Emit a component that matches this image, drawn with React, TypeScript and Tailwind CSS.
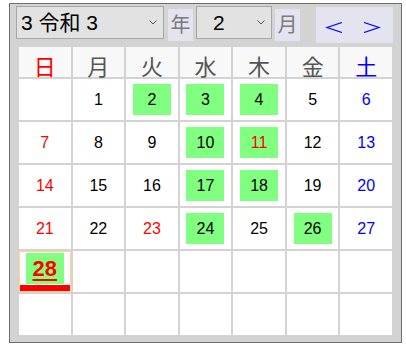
import React from 'react';

// ─────────────────────────────────────────
// Data
// ─────────────────────────────────────────

const WEEKDAYS = ['日', '月', '火', '水', '木', '金', '土'];
const FIRST_WEEKDAY = 1; // 令和3年2月1日 = 月曜
const DAYS_IN_MONTH = 28;
const TODAY = 28;
const HOLIDAYS = [11, 23];
const MARKED = [2, 3, 4, 10, 11, 17, 18, 24, 26, 28];

const font = "font-['Liberation_Sans','Noto_Sans_CJK_JP',sans-serif]";

// ─────────────────────────────────────────
// Pieces
// ─────────────────────────────────────────

function Chevron() {
  return (
    <svg width="8" height="5" viewBox="0 0 8 5" className="shrink-0">
      <polyline points="0.5,0.5 4,4 7.5,0.5" fill="none" stroke="#555" strokeWidth="1" />
    </svg>
  );
}

function FakeSelect({ value, className }: { value: string; className?: string }) {
  return (
    <div
      className={`flex h-[33px] items-center border border-[#a6a6a6] bg-[#e2e2e2] pr-[6px] text-[21px] text-black ${className ?? ''}`}
    >
      <span className="flex-1 whitespace-pre leading-none">{value}</span>
      <Chevron />
    </div>
  );
}

function Label({ text }: { text: string }) {
  return (
    <div className="mt-[3px] flex h-[32px] w-[25px] items-center justify-center bg-[#e4e4f1] text-[20px] leading-none text-[#7a7a7a]">
      {text}
    </div>
  );
}

function dayColor(day: number, col: number) {
  if (col === 0 || HOLIDAYS.includes(day)) return 'text-[#ff0000]';
  if (col === 6) return 'text-[#0000ff]';
  return 'text-black';
}

function DayCell({ day, col }: { day: number | null; col: number }) {
  if (day === null) return <div className="bg-white" />;

  if (day === TODAY) {
    return (
      <div className="flex flex-col items-center border border-[#ffd58f] bg-white">
        <div className="mt-[1px] flex h-[31px] w-[38px] items-center justify-center bg-[#80ff80] text-[22px] font-bold leading-none text-[#ff0000] underline underline-offset-[3px]">
          {day}
        </div>
        <div className="mt-auto h-[6px] w-full bg-[#ff0000]" />
      </div>
    );
  }

  const marked = MARKED.includes(day);
  return (
    <div className="flex items-center justify-center bg-white">
      <span
        className={`flex h-[31px] w-[38px] items-center justify-center text-[16px] leading-none ${dayColor(day, col)} ${marked ? 'bg-[#80ff80]' : ''}`}
      >
        {day}
      </span>
    </div>
  );
}

// ─────────────────────────────────────────
// App
// ─────────────────────────────────────────

export default function App() {
  const cells: (number | null)[] = [];
  for (let i = 0; i < 42; i++) {
    const d = i - FIRST_WEEKDAY + 1;
    cells.push(d >= 1 && d <= DAYS_IN_MONTH ? d : null);
  }

  return (
    <div className={`min-h-[346px] bg-white pl-[9px] pt-[3px] ${font}`}>
      <div className="h-[340px] w-[393px] border border-[#6e6e6e] bg-[#d3d3d3] pt-[2px]">
        {/* toolbar */}
        <div className="flex items-start pl-[6px]">
          <FakeSelect value="3 令和 3" className="w-[148px] pl-[4px]" />
          <div className="ml-[4px]">
            <Label text="年" />
          </div>
          <FakeSelect value="2" className="ml-[3px] w-[76px] pl-[16px]" />
          <div className="ml-[3px]">
            <Label text="月" />
          </div>
          <div className="ml-[16px] mt-[1px] flex h-[36px] w-[77px] items-start bg-[#e4e4f1] pt-[15px]">
            <svg width="77" height="11" viewBox="0 0 77 11">
              <polyline points="26,0.5 11,5.5 26,10.5" fill="none" stroke="#0000ff" strokeWidth="1.2" />
              <polyline points="48,0.5 63,5.5 48,10.5" fill="none" stroke="#0000ff" strokeWidth="1.2" />
            </svg>
          </div>
        </div>

        {/* calendar */}
        <div className="mx-[9px] mt-[4px] grid w-[373px] grid-cols-7 grid-rows-[30px_repeat(6,41px)] gap-[2px]">
          {WEEKDAYS.map((w, i) => (
            <div
              key={w}
              className={`flex items-center justify-center bg-[#f8f8f8] pt-[6px] font-['Noto_Sans_CJK_JP',sans-serif] text-[22px] leading-none ${
                i === 0 ? 'text-[#ff0000]' : i === 6 ? 'text-[#0000ff]' : 'text-[#555555]'
              }`}
            >
              {w}
            </div>
          ))}
          {cells.map((d, i) => (
            <DayCell key={i} day={d} col={i % 7} />
          ))}
        </div>
      </div>
    </div>
  );
}
